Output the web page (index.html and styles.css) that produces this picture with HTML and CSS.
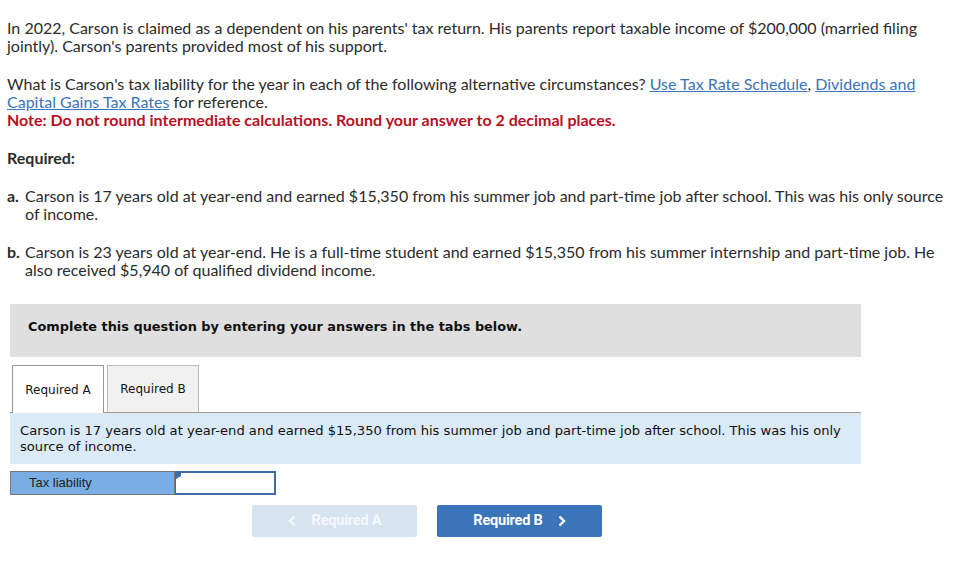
FILE: index.html
```html
<!DOCTYPE html>
<html>
<head>
<meta charset="utf-8">
<link rel="stylesheet" href="styles.css">
</head>
<body>
<div class="page">
  <p class="para">In 2022, Carson is claimed as a dependent on his parents' tax return. His parents report taxable income of $200,000 (married filing jointly). Carson's parents provided most of his support.</p>
  <p class="para">What is Carson's tax liability for the year in each of the following alternative circumstances? <a class="link" href="#">Use Tax Rate Schedule</a>, <a class="link" href="#">Dividends and Capital Gains Tax Rates</a> for reference.<br><span class="note">Note: Do not round intermediate calculations. Round your answer to 2 decimal places.</span></p>
  <p class="req-title">Required:</p>
  <div class="item"><span class="item-label">a.</span><span class="item-text">Carson is 17 years old at year-end and earned $15,350 from his summer job and part-time job after school. This was his only source of income.</span></div>
  <div class="item"><span class="item-label">b.</span><span class="item-text">Carson is 23 years old at year-end. He is a full-time student and earned $15,350 from his summer internship and part-time job. He also received $5,940 of qualified dividend income.</span></div>

  <div class="widget">
    <div class="banner">Complete this question by entering your answers in the tabs below.</div>
    <div class="tabs">
      <div class="tab active">Required A</div>
      <div class="tab">Required B</div>
    </div>
    <div class="prompt">Carson is 17 years old at year-end and earned $15,350 from his summer job and part-time job after school. This was his only source of income.</div>
    <div class="answer-row">
      <div class="answer-label">Tax liability</div>
      <div class="answer-input"><span class="flag"></span></div>
    </div>
    <div class="nav">
      <div class="btn btn-prev"><svg class="chev" width="8" height="12" viewBox="0 0 8 12"><path d="M6.5 1.5 L2 6 L6.5 10.5" fill="none" stroke="currentColor" stroke-width="2.4"/></svg><span>Required A</span></div>
      <div class="btn btn-next"><span>Required B</span><svg class="chev" width="8" height="12" viewBox="0 0 8 12"><path d="M1.5 1.5 L6 6 L1.5 10.5" fill="none" stroke="currentColor" stroke-width="2.4"/></svg></div>
    </div>
  </div>
</div>
</body>
</html>
```
FILE: styles.css
```css
html, body { margin: 0; padding: 0; background: #fff; }
.page {
  padding: 19px 0 0 7px;
  font-family: Lato, "Liberation Sans", sans-serif;
  font-size: 16px;
  line-height: 18px;
  color: #2b2b2b;
  width: 940px;
}
.para { margin: 0 0 20px 0; }
.link { color: #3b73b9; text-decoration: underline; }
.note { color: #b8101f; font-weight: bold; }
.req-title { margin: 19px 0 20px 0; font-weight: bold; }
.item { display: flex; margin-bottom: 20px; }
.item-label { width: 18px; flex: none; font-weight: bold; }
.item-text { flex: 1; }

.widget { margin-left: 3px; width: 851px; margin-top: 25px; }
.banner {
  background: #dfdfdf;
  height: 53px;
  box-sizing: border-box;
  padding: 15px 18px;
  font-family: "DejaVu Sans", Verdana, sans-serif;
  font-weight: bold;
  font-size: 12.9px;
  line-height: 16px;
  color: #111;
}
.tabs {
  display: flex;
  gap: 3px;
  margin-top: 8px;
  padding-left: 2px;
  border-bottom: 1px solid #999;
  height: 47px;
}
.tab {
  width: 92px;
  box-sizing: border-box;
  border: 1px solid #bbb;
  border-bottom: none;
  background: #f1f1f1;
  display: flex;
  align-items: center;
  justify-content: center;
  font-family: "DejaVu Sans", Verdana, sans-serif;
  font-size: 12px;
  color: #111;
}
.tab.active {
  background: #fff;
  border-color: #999;
  height: 48px;
}
.prompt {
  background: #dbeaf7;
  padding: 10px 4px 9px 10px;
  font-family: "DejaVu Sans", Verdana, sans-serif;
  font-size: 13.1px;
  line-height: 16px;
  color: #111;
}
.answer-row {
  display: flex;
  margin-top: 7px;
  height: 24px;
}
.answer-label {
  width: 165px;
  box-sizing: border-box;
  background: #7aade3;
  border: 1px solid #777;
  padding-left: 18px;
  font-family: "Liberation Sans", Arial, sans-serif;
  font-size: 13px;
  line-height: 22px;
  color: #222;
}
.answer-input {
  width: 101px;
  box-sizing: border-box;
  background: #fff;
  border: 2px solid #3d6ba6;
  border-left-width: 1px;
  position: relative;
}
.flag {
  position: absolute;
  left: 0; top: 0;
  width: 0; height: 0;
  border-top: 3px solid #3a6fb6;
  border-bottom: 3px solid transparent;
  border-left: 5px solid #3a6fb6;
}
.nav {
  display: flex;
  gap: 20px;
  margin-top: 10px;
  margin-left: 242px;
}
.btn {
  width: 165px;
  height: 32px;
  border-radius: 2px;
  display: flex;
  align-items: center;
  justify-content: center;
  font-family: Roboto, "Liberation Sans", sans-serif;
  font-weight: bold;
  font-size: 14.5px;
  letter-spacing: -0.2px;
  color: #fff;
  gap: 15px;
}
.btn-prev { background: #d8e3f0; color: #f4f7fb; gap: 16px; }
.btn-next { background: #3a75b9; }
.chev { display: block; }
```
